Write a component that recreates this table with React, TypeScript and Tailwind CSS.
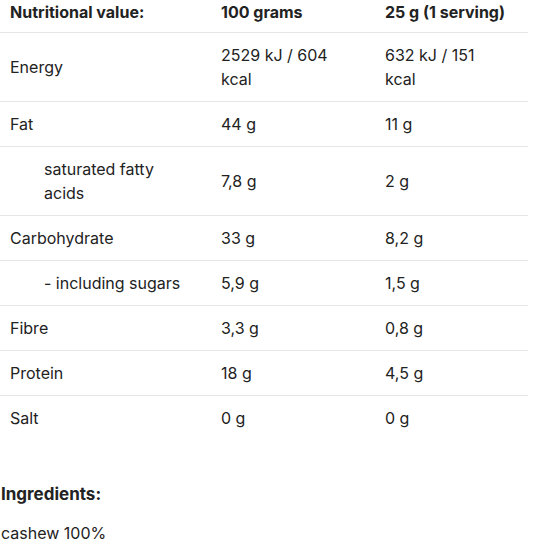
import React from 'react';

type Row = { label: string; per100: string; perServing: string; sub?: boolean };

const rows: Row[] = [
  { label: 'Energy', per100: '2529 kJ / 604 kcal', perServing: '632 kJ / 151 kcal' },
  { label: 'Fat', per100: '44 g', perServing: '11 g' },
  { label: 'saturated fatty\nacids', per100: '7,8 g', perServing: '2 g', sub: true },
  { label: '- including sugars', per100: '5,9 g', perServing: '1,5 g', sub: true },
  { label: 'Fibre', per100: '3,3 g', perServing: '0,8 g' },
  { label: 'Protein', per100: '18 g', perServing: '4,5 g' },
  { label: 'Salt', per100: '0 g', perServing: '0 g' },
];
rows.splice(3, 0, { label: 'Carbohydrate', per100: '33 g', perServing: '8,2 g' });

const App: React.FC = () => {
  return (
    <div className="w-[533px] h-[540px] overflow-hidden bg-white text-[#222] font-['Inter',sans-serif] text-[16px] leading-6">
      <div className="w-[528px]">
        {/* Header */}
        <div className="grid grid-cols-[211px_164px_1fr] font-bold h-[33px] border-b border-[#e6e6e6]">
          <div className="px-[10px]">Nutritional value:</div>
          <div className="px-[10px]">100 grams</div>
          <div className="px-[10px]">25 g (1 serving)</div>
        </div>
        {rows.map((r, i) => (
          <div
            key={r.label}
            className={`grid grid-cols-[211px_164px_1fr] items-center py-[10px] ${i < rows.length - 1 ? 'border-b border-[#e6e6e6]' : ''}`}
          >
            <div className={`whitespace-pre-line ${r.sub ? 'pl-[44px] pr-[10px]' : 'px-[10px]'}`}>{r.label}</div>
            <div className="px-[10px]">
              <span className="block w-[125px]">{r.per100}</span>
            </div>
            <div className="px-[10px]">
              <span className="block w-[115px]">{r.perServing}</span>
            </div>
          </div>
        ))}
      </div>
      {/* Ingredients */}
      <div className="mt-[42px] pl-[1px]">
        <div className="font-bold text-[17px] leading-6">Ingredients:</div>
        <div className="mt-[15px]">cashew 100%</div>
      </div>
    </div>
  );
};

export default App;
